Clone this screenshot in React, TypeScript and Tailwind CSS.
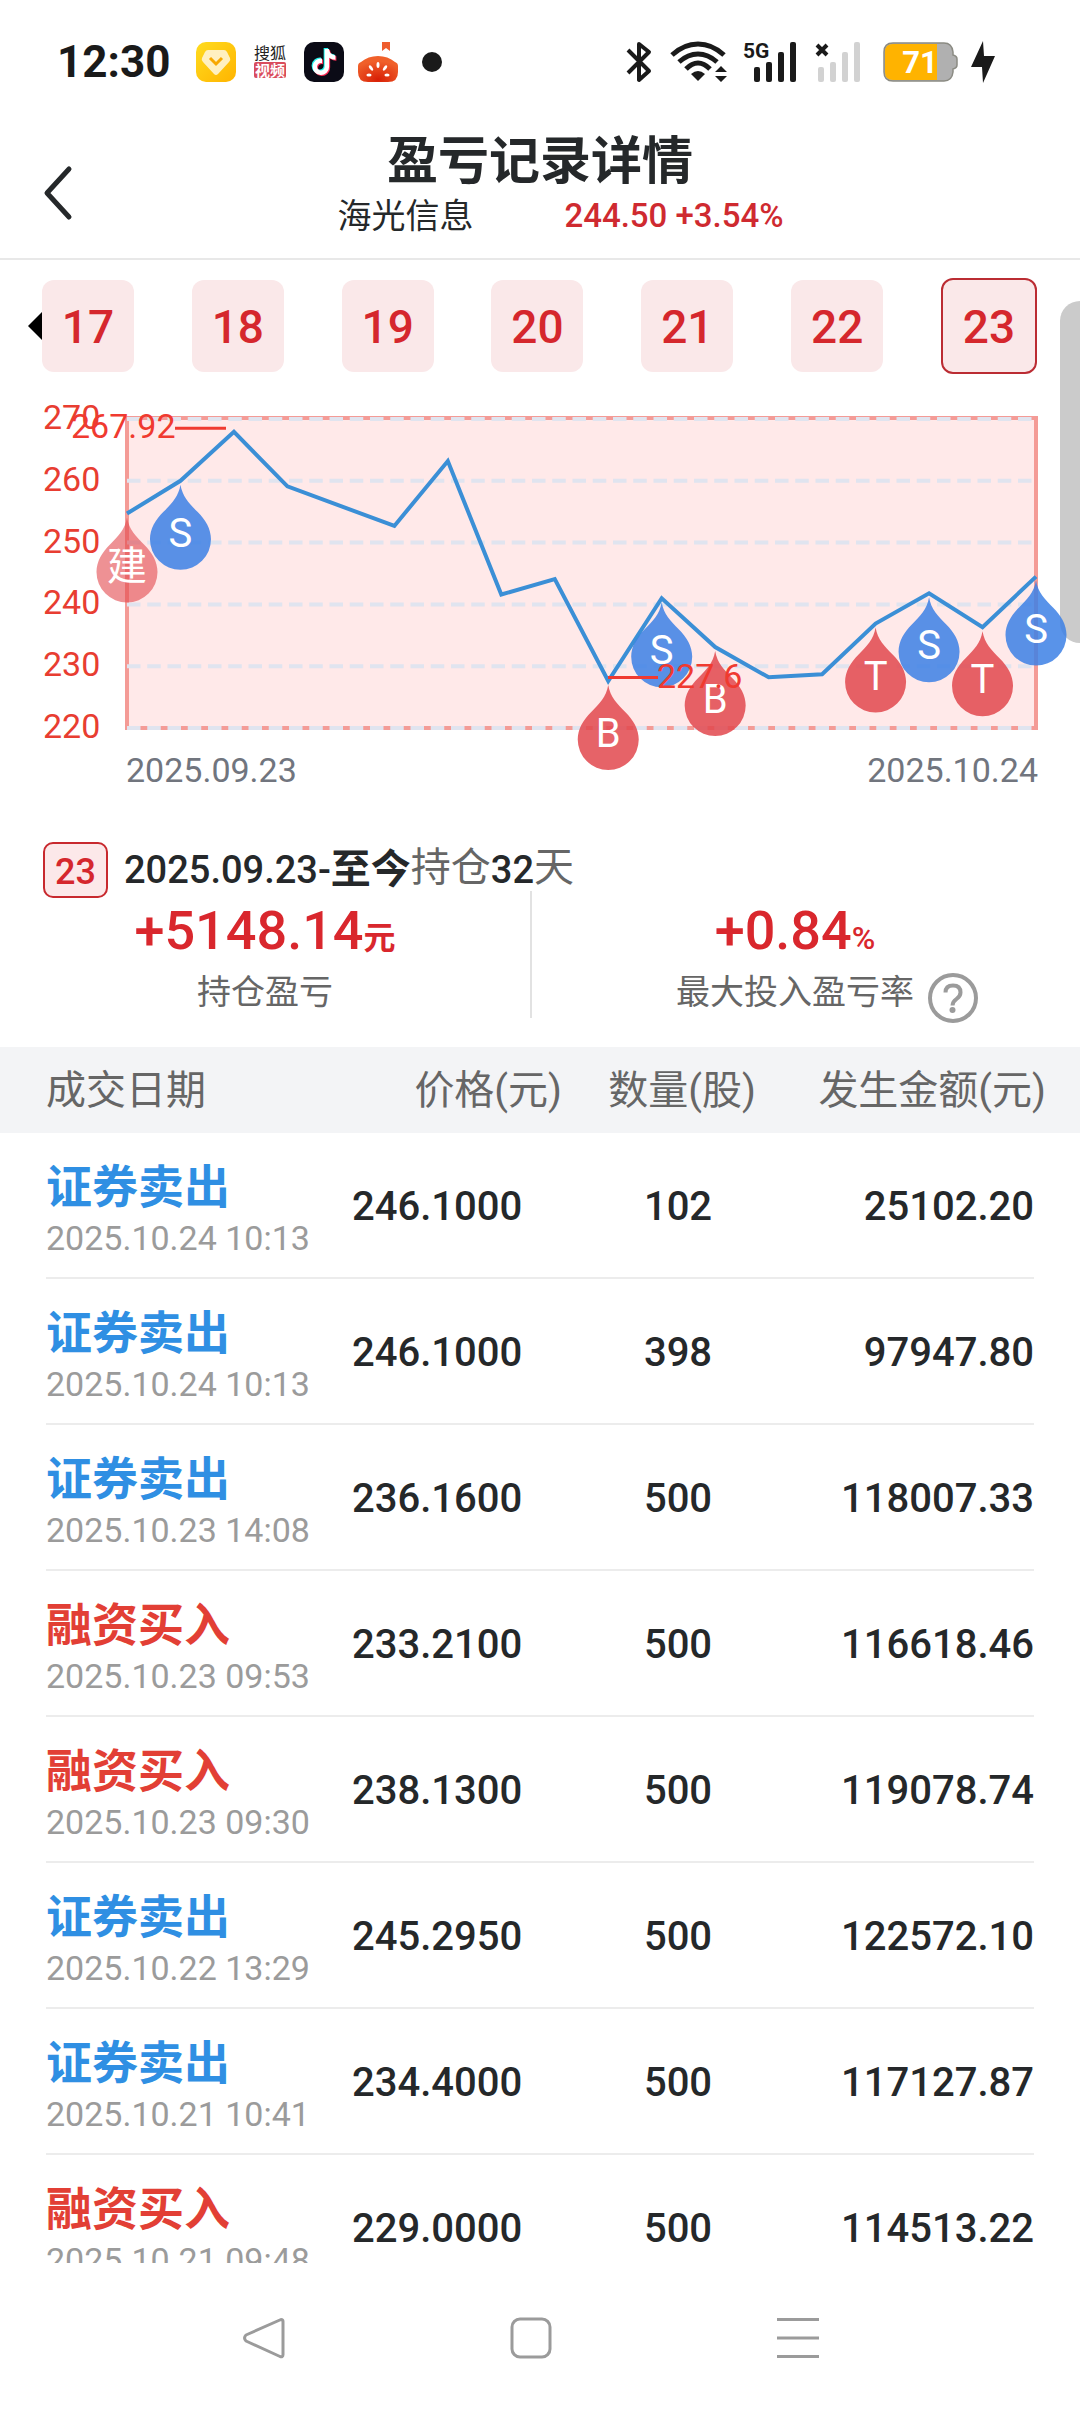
import { FaTiktok } from "react-icons/fa6";

const tabs = ["17", "18", "19", "20", "21", "22", "23"];
const activeTab = "23";

const prices = [
  254.7, 260, 267.92, 259.1, 255.9, 252.7, 263.2, 241.6, 244.1, 227.6, 241, 233.1, 228.2, 228.7,
  236.9, 241.8, 236.3, 244.5,
];

const markers = [
  { index: 0, label: "建", kind: "open" },
  { index: 1, label: "S", kind: "sell" },
  { index: 9, label: "B", kind: "buy" },
  { index: 10, label: "S", kind: "sell" },
  { index: 11, label: "B", kind: "buy" },
  { index: 14, label: "T", kind: "buy" },
  { index: 15, label: "S", kind: "sell" },
  { index: 16, label: "T", kind: "buy" },
  { index: 17, label: "S", kind: "sell" },
];

const markerFill: Record<string, string> = {
  open: "fill-[#e2484d] opacity-60",
  sell: "fill-[#3c80e5] opacity-85",
  buy: "fill-[#e2484d] opacity-85",
};

const trades = [
  { type: "sell", time: "2025.10.24 10:13", price: "246.1000", count: "102", amount: "25102.20" },
  { type: "sell", time: "2025.10.24 10:13", price: "246.1000", count: "398", amount: "97947.80" },
  { type: "sell", time: "2025.10.23 14:08", price: "236.1600", count: "500", amount: "118007.33" },
  { type: "buy", time: "2025.10.23 09:53", price: "233.2100", count: "500", amount: "116618.46" },
  { type: "buy", time: "2025.10.23 09:30", price: "238.1300", count: "500", amount: "119078.74" },
  { type: "sell", time: "2025.10.22 13:29", price: "245.2950", count: "500", amount: "122572.10" },
  { type: "sell", time: "2025.10.21 10:41", price: "234.4000", count: "500", amount: "117127.87" },
  { type: "buy", time: "2025.10.21 09:48", price: "229.0000", count: "500", amount: "114513.22" },
];

function StatusBar() {
  return (
    <div className="flex h-[124px] shrink-0 items-center justify-between pl-[57px] pr-[85px] text-[#1a1a1a]">
      <div className="flex items-center gap-[14px]">
        <span className="mr-[12px] text-[44px] leading-[50px] font-bold">12:30</span>
        <svg width="40" height="40" viewBox="0 0 40 40">
          <defs>
            <linearGradient id="gold" x1="0" y1="0" x2="1" y2="1">
              <stop offset="0" stopColor="#ffdc1f" />
              <stop offset="1" stopColor="#ffb400" />
            </linearGradient>
          </defs>
          <rect width="40" height="40" rx="10" fill="url(#gold)" />
          <path
            d="M12 8h16q2 0 3 2l3 6q1 2-1 4L22 32q-2 2-4 0L7 20q-2-2-1-4l3-6q1-2 3-2z"
            fill="#fff0c0"
          />
          <path d="M14 16l6 6 6-6" fill="none" stroke="#f7a800" strokeWidth="3" />
        </svg>
        <svg width="40" height="40" viewBox="0 0 40 40" fontSize="15">
          <text x="20" y="17" textAnchor="middle" fontSize="16" fill="#222">搜狐</text>
          <rect x="4" y="20" width="32" height="16" rx="2" fill="#d94c5c" />
          <text x="20" y="34" textAnchor="middle" fontWeight="700" fill="#fff">视频</text>
        </svg>
        <span className="relative block size-[40px] rounded-[10px] bg-[#0b0b16]">
          <FaTiktok className="absolute top-[6px] left-[6px] size-[26px] text-[#25f4ee]" />
          <FaTiktok className="absolute top-[8px] left-[8px] size-[26px] text-[#fe2c55]" />
          <FaTiktok className="absolute top-[7px] left-[7px] size-[26px] text-white" />
        </span>
        <svg width="40" height="40" viewBox="0 0 40 40">
          <defs>
            <radialGradient id="tomato" cx="0.5" cy="0.9" r="0.7">
              <stop offset="0" stopColor="#d81f06" />
              <stop offset="1" stopColor="#f0602a" />
            </radialGradient>
          </defs>
          <path d="M24 0h8v9l-4-3-4 3z" fill="#ee5d2e" />
          <path d="M0 24q0-3 3-4 7-6 17-6t17 6q3 1 3 4v6q0 10-10 10H10Q0 40 0 30z" fill="url(#tomato)" />
          <g fill="#fff">
            <ellipse cx="20" cy="23" rx="1.5" ry="3" />
            <ellipse cx="13" cy="26" rx="1.5" ry="3" transform="rotate(-35 13 26)" />
            <ellipse cx="27" cy="26" rx="1.5" ry="3" transform="rotate(35 27 26)" />
            <ellipse cx="11" cy="33" rx="2.6" ry="1.5" />
            <ellipse cx="29" cy="33" rx="2.6" ry="1.5" />
          </g>
        </svg>
        <span className="ml-[10px] size-[20px] rounded-full bg-[#1a1a1a]" />
      </div>

      <div className="flex items-center gap-[13px]">
        <svg width="31" height="42" viewBox="0 0 31 42" fill="none" stroke="currentColor" strokeWidth="4">
          <path d="M2 9l21 21-10 9V3l10 8L2 32" strokeLinejoin="round" />
        </svg>
        <svg width="60" height="42" viewBox="0 0 60 42" fill="currentColor">
          <g fill="none" stroke="currentColor" strokeWidth="5">
            <path d="M2 14q12-11 26-11t26 11" />
            <path d="M9 21q9-8 19-8t19 8" />
            <path d="M16 28q6-6 12-6t12 6" />
          </g>
          <path d="M21 33q7-6 14 0l-7 7z" />
          <path d="M51 25l6 6H45zM51 41l-6-6h12z" />
        </svg>
        <svg width="59" height="42" viewBox="0 0 59 42" fill="currentColor" className="overflow-visible">
          <text x="0" y="17" fontSize="21" fontWeight="700">5G</text>
          <rect x="11" y="26" width="6" height="15" rx="2" />
          <rect x="23" y="21" width="6" height="20" rx="2" />
          <rect x="35" y="11" width="6" height="30" rx="2" />
          <rect x="47" y="1" width="6" height="40" rx="2" />
        </svg>
        <svg width="55" height="42" viewBox="0 0 55 42" fill="#d2d2d2">
          <path d="M2 4l10 10M12 4L2 14" stroke="#1a1a1a" strokeWidth="4" />
          <rect x="3" y="26" width="6" height="15" rx="2" />
          <rect x="15" y="21" width="6" height="20" rx="2" />
          <rect x="27" y="11" width="6" height="30" rx="2" />
          <rect x="39" y="1" width="6" height="40" rx="2" />
        </svg>
        <svg width="75" height="40" viewBox="0 0 75 40">
          <path
            d="M10 1h51q8 0 9 9v3q4 1 4 4v6q0 3-4 4v3q-1 9-9 9H10q-9 0-9-9V10q0-9 9-9z"
            fill="#b0b0b0"
            stroke="#8b8b83"
            strokeWidth="1.5"
          />
          <path d="M10 2h44v36H10q-8 0-8-8V10q0-8 8-8z" fill="#ffb300" />
          <text x="37" y="31" textAnchor="middle" fontSize="31" fontWeight="700" fill="#fff">71</text>
        </svg>
        <svg width="24" height="42" viewBox="0 0 24 42" fill="currentColor">
          <path d="M12 0L0 26h11l1 16 12-27H13z" />
        </svg>
      </div>
    </div>
  );
}

function Header() {
  return (
    <header className="grid h-[136px] shrink-0 grid-cols-[140px_1fr_140px] border-b-2 border-[#e8e8e8]">
      <button type="button" aria-label="返回" className="flex items-center pt-[3px] pl-[42px]">
        <svg width="32" height="56" viewBox="0 0 32 56" fill="none" stroke="#25282a" strokeWidth="5">
          <path d="M27 4L5 28l22 24" strokeLinecap="round" strokeLinejoin="round" />
        </svg>
      </button>
      <div className="pt-[6px] text-center text-[#25282a]">
        <h1 className="text-[51px] leading-[64px] font-bold">盈亏记录详情</h1>
        <div className="flex justify-center gap-[91px] pl-[41px] leading-[44px]">
          <span className="text-[34px]">海光信息</span>
          <span className="text-[33px] font-medium text-[#cf2a30]">244.50 +3.54%</span>
        </div>
      </div>
    </header>
  );
}

function RecordTabs() {
  return (
    <div className="flex items-center px-[28px] pt-[18px]">
      <svg width="14" height="28" viewBox="0 0 14 28" className="shrink-0">
        <path d="M14 0v28L0 14z" />
      </svg>
      <div className="mr-[15px] flex h-[96px] flex-1 items-center justify-between">
        {tabs.map((tab) => (
          <button
            key={tab}
            type="button"
            className={`rounded-[12px] bg-[#fae8e9] pt-[3px] text-[46px] font-medium text-[#d5272d] ${
              tab === activeTab ? "h-[96px] w-[96px] border-2 border-[#bb2c33]" : "h-[92px] w-[92px]"
            }`}
          >
            {tab}
          </button>
        ))}
      </div>
    </div>
  );
}

const LEFT = 127;
const RIGHT = 1036;
const TOP = 41;
const BOTTOM = 350;
const levels = [270, 260, 250, 240, 230, 220];

const toX = (index: number) => LEFT + (index * (RIGHT - LEFT)) / (prices.length - 1);
const toY = (price: number) => BOTTOM - ((price - 220) * (BOTTOM - TOP)) / 50;

function PriceChart() {
  const line = prices.map((price, index) => `${toX(index)},${toY(price)}`).join(" ");
  const highY = toY(267.92);
  const lowY = toY(227.6);

  return (
    <svg viewBox="0 0 1080 420" className="relative mt-[4px] block w-full text-[34px]" fill="none">
      <rect x={LEFT} y="40" width={RIGHT - LEFT} height={BOTTOM - 40} fill="#ffe9e9" stroke="#f49b96" strokeWidth="4" />
      {levels.map((level) => (
        <g key={level}>
          <line
            x1={LEFT}
            x2={RIGHT - 4}
            y1={toY(level)}
            y2={toY(level)}
            stroke="#e0e4ef"
            strokeWidth="4"
            strokeDasharray="13.5 6.75"
          />
          <text x="43" y={toY(level) + 10} fill="#e83d31">
            {level}
          </text>
        </g>
      ))}
      <polyline points={line} stroke="#3b8fd6" strokeWidth="4" />

      {markers.map((marker) => (
        <g key={marker.index} transform={`translate(${toX(marker.index)} ${toY(prices[marker.index]) + 4})`}>
          <path
            d="M0 0C2 12 9 19 17 27C25 35 30.500 44 30.500 54.500A30.500 30.500 0 0 1-30.500 54.500C-30.500 44-25 35-17 27C-9 19-2 12 0 0Z"
            className={markerFill[marker.kind]}
          />
          <text y="62" textAnchor="middle" className="text-[40px]" fill="#fff">
            {marker.label}
          </text>
        </g>
      ))}

      <g fill="#f03a30" stroke="none">
        <text x="71" y={highY + 6}>267.92</text>
        <text x="657" y={lowY + 7}>227.6</text>
        <path d={`M175 ${highY - 5}h51v3h-51zM608 ${lowY - 5}h50v3h-50z`} />
      </g>
      <g fill="#71757e">
        <text x="126" y="404">2025.09.23</text>
        <text x="1038" y="404" textAnchor="end">2025.10.24</text>
      </g>
    </svg>
  );
}

function Summary() {
  return (
    <section className="pt-[44px] pb-[24px]">
      <div className="flex h-[56px] items-center pl-[43px] text-[40px] leading-[48px] text-[#25282a]">
        <span className="mr-[16px] flex h-[56px] w-[65px] items-center justify-center rounded-[10px] border-2 border-[#c8292e] bg-[#fce8e9] pt-[3px] text-[36px] font-medium text-[#d5272d]">
          23
        </span>
        <span className="text-[38px] font-medium">2025.09.23-</span>
        <span className="font-bold">至今</span>
        <span className="pb-1 text-[#666]">持仓</span>
        <span className="text-[38px] font-medium">32</span>
        <span className="pb-1 text-[#666]">天</span>
      </div>

      <div className="mr-[20px] grid grid-cols-2 text-center">
        <div>
          <p className="h-[66px] text-[54px] leading-[66px] font-medium text-[#d9272d]">
            +5148.14<span className="text-[32px] leading-none font-bold">元</span>
          </p>
          <p className="text-[34px] leading-[56px] text-[#666]">持仓盈亏</p>
        </div>
        <div className="relative">
          <span className="absolute -top-[7px] bottom-[5px] left-0 w-[2px] bg-[#e2e2e2]" />
          <p className="h-[66px] text-[54px] leading-[66px] font-medium text-[#d9272d]">
            +0.84<span className="text-[32px] leading-none">%</span>
          </p>
          <div className="grid h-[59px] grid-cols-[1fr_auto_1fr]">
            <p className="col-start-2 text-[34px] leading-[56px] text-[#666]">最大投入盈亏率</p>
            <button type="button" aria-label="说明" className="ml-[14px] self-end justify-self-start">
              <svg width="50" height="50" viewBox="0 0 50 50" fill="none" stroke="#9b9b9b" strokeWidth="4">
                <circle cx="25" cy="25" r="23" />
                <path d="M17.500 19.500q0-7 7.500-7t7.500 7q0 3.500-4 6.500t-4 6.500" />
                <circle cx="24.500" cy="37" r="3" fill="#9b9b9b" stroke="none" />
              </svg>
            </button>
          </div>
        </div>
      </div>
    </section>
  );
}

function TradeTable() {
  return (
    <table className="block">
      <thead className="block bg-[#f3f4f6] px-[46px]">
        <tr className="grid h-[86px] grid-cols-[306fr_226fr_200fr_256fr] items-center pt-[2px] text-[40px] text-[#666] *:font-normal">
          <th className="text-left">成交日期</th>
          <th className="pr-4 text-right">价格(元)</th>
          <th className="pl-2">数量(股)</th>
          <th className="-mr-3 text-right">发生金额(元)</th>
        </tr>
      </thead>
      <tbody className="block px-[46px]">
        {trades.map((trade, index) => (
          <tr
            key={index}
            className="grid h-[146px] grid-cols-[306fr_226fr_200fr_256fr] items-center border-b-2 border-[#ececec] pt-1 text-[40px] font-medium text-[#25282a]"
          >
            <td className="pt-[6px]">
              <p
                className={`text-[46px] leading-[56px] font-bold ${
                  trade.type === "sell" ? "text-[#2f8fe3]" : "text-[#e23f35]"
                }`}
              >
                {trade.type === "sell" ? "证券卖出" : "融资买入"}
              </p>
              <p className="text-[34px] leading-[46px] font-normal whitespace-nowrap text-[#9b9b9b]">{trade.time}</p>
            </td>
            <td>{trade.price}</td>
            <td className="text-center">{trade.count}</td>
            <td className="text-right">{trade.amount}</td>
          </tr>
        ))}
      </tbody>
    </table>
  );
}

function NavBar() {
  return (
    <nav className="grid h-[149px] shrink-0 grid-cols-3 items-center justify-items-center pr-[149px] pl-[130px] text-[#9b9b9b]">
      <button type="button" aria-label="后退">
        <svg width="42" height="42" viewBox="0 0 42 42" fill="none" stroke="currentColor" strokeWidth="3">
          <path d="M38 2.500q2 0 2 2v33q0 3-3 2L3 24q-3-3 0-6z" strokeLinejoin="round" />
        </svg>
      </button>
      <button type="button" aria-label="主屏幕">
        <svg width="42" height="42" viewBox="0 0 42 42" fill="none" stroke="currentColor" strokeWidth="3">
          <rect x="2" y="2" width="38" height="38" rx="8" />
        </svg>
      </button>
      <button type="button" aria-label="最近任务">
        <svg width="42" height="42" viewBox="0 0 42 42" fill="none" stroke="currentColor" strokeWidth="3">
          <path d="M0 2.500h42M0 21h42M0 39.500h42" />
        </svg>
      </button>
    </nav>
  );
}

export default function App() {
  return (
    <div className="flex h-screen flex-col bg-white font-['Roboto','Noto_Sans_CJK_SC',sans-serif]">
      <StatusBar />
      <Header />
      <main className="relative min-h-0 flex-1 overflow-hidden">
        <span className="absolute top-[41px] right-0 h-[342px] w-[20px] rounded-l-[20px] bg-[#cbcbcb]" />
        <RecordTabs />
        <PriceChart />
        <Summary />
        <TradeTable />
      </main>
      <NavBar />
    </div>
  );
}
